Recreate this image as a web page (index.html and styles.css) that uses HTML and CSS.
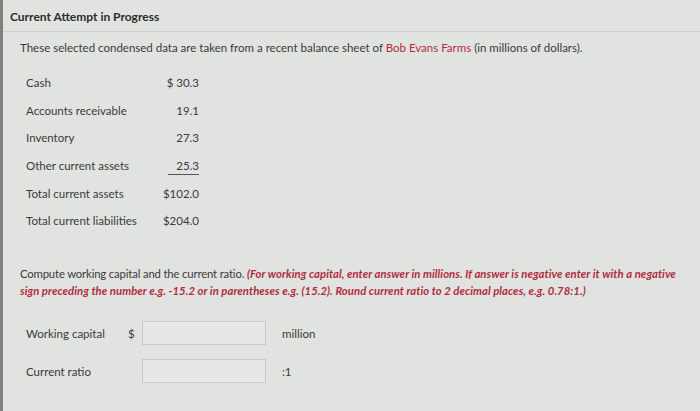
FILE: index.html
```html
<!DOCTYPE html>
<html>
<head>
<meta charset="utf-8">
<link rel="stylesheet" href="styles.css">
</head>
<body>
<div class="frame">
  <div class="header">Current Attempt in Progress</div>
  <div class="content">
    <p class="intro">These selected condensed data are taken from a recent balance sheet of <span class="red">Bob Evans Farms</span> (in millions of dollars).</p>
    <div class="data">
      <div class="label">Cash</div><div class="val">$ 30.3</div>
      <div class="label">Accounts receivable</div><div class="val">19.1</div>
      <div class="label">Inventory</div><div class="val">27.3</div>
      <div class="label">Other current assets</div><div class="val"><span class="ul">25.3</span></div>
      <div class="label">Total current assets</div><div class="val">$102.0</div>
      <div class="label">Total current liabilities</div><div class="val">$204.0</div>
    </div>
    <p class="question">Compute working capital and the current ratio. <em class="red">(For working capital, enter answer in millions. If answer is negative enter it with a negative sign preceding the number e.g. -15.2 or in parentheses e.g. (15.2). Round current ratio to 2 decimal places, e.g. 0.78:1.)</em></p>
    <div class="answers">
      <div class="alabel">Working capital</div><div class="cur">$</div><div class="box"></div><div class="unit">million</div>
      <div class="alabel">Current ratio</div><div class="cur"></div><div class="box"></div><div class="unit">:1</div>
    </div>
  </div>
</div>
</body>
</html>
```
FILE: styles.css
```css
html, body {
  margin: 0;
  padding: 0;
}
body {
  width: 700px;
  height: 411px;
  overflow: hidden;
  background: #e1e3e0;
  font-family: Lato, "Open Sans", sans-serif;
  color: #3a3a3a;
}
.frame {
  height: 411px;
  border-left: 3px solid #80817f;
  box-sizing: border-box;
}
.header {
  height: 32px;
  box-sizing: border-box;
  padding: 9px 0 0 7px;
  font-size: 12px;
  font-weight: bold;
  color: #2c2c2c;
  border-bottom: 1px solid #cfd1ce;
}
.content {
  padding: 0 10px 0 17px;
}
.intro {
  margin: 8px 0 0 0;
  font-size: 11.5px;
  line-height: 16px;
}
.red {
  color: #b12c3f;
}
.data {
  display: grid;
  grid-template-columns: 135px 38px;
  grid-auto-rows: 27.6px;
  margin: 13px 0 0 6px;
  font-size: 11.5px;
  align-items: center;
}
.val {
  text-align: right;
  white-space: nowrap;
}
.ul {
  display: inline-block;
  border-bottom: 1px solid #555;
  padding: 0 0 2px 8px;
  margin-bottom: -3px;
}
.question {
  margin: 30px 0 0 0;
  font-size: 11.3px;
  line-height: 17px;
  letter-spacing: -0.15px;
}
.question em {
  font-weight: bold;
  font-style: italic;
  letter-spacing: 0.05px;
}
.answers {
  display: grid;
  grid-template-columns: 102px 14px 124px 16px auto;
  grid-auto-rows: 25px;
  row-gap: 13px;
  margin: 22px 0 0 6px;
  font-size: 11.5px;
  align-items: center;
}
.answers .box {
  height: 24px;
  box-sizing: border-box;
  border: 1px solid #c8cac7;
  background: #e6e8e5;
}
.answers .unit {
  grid-column: 5;
}
```
